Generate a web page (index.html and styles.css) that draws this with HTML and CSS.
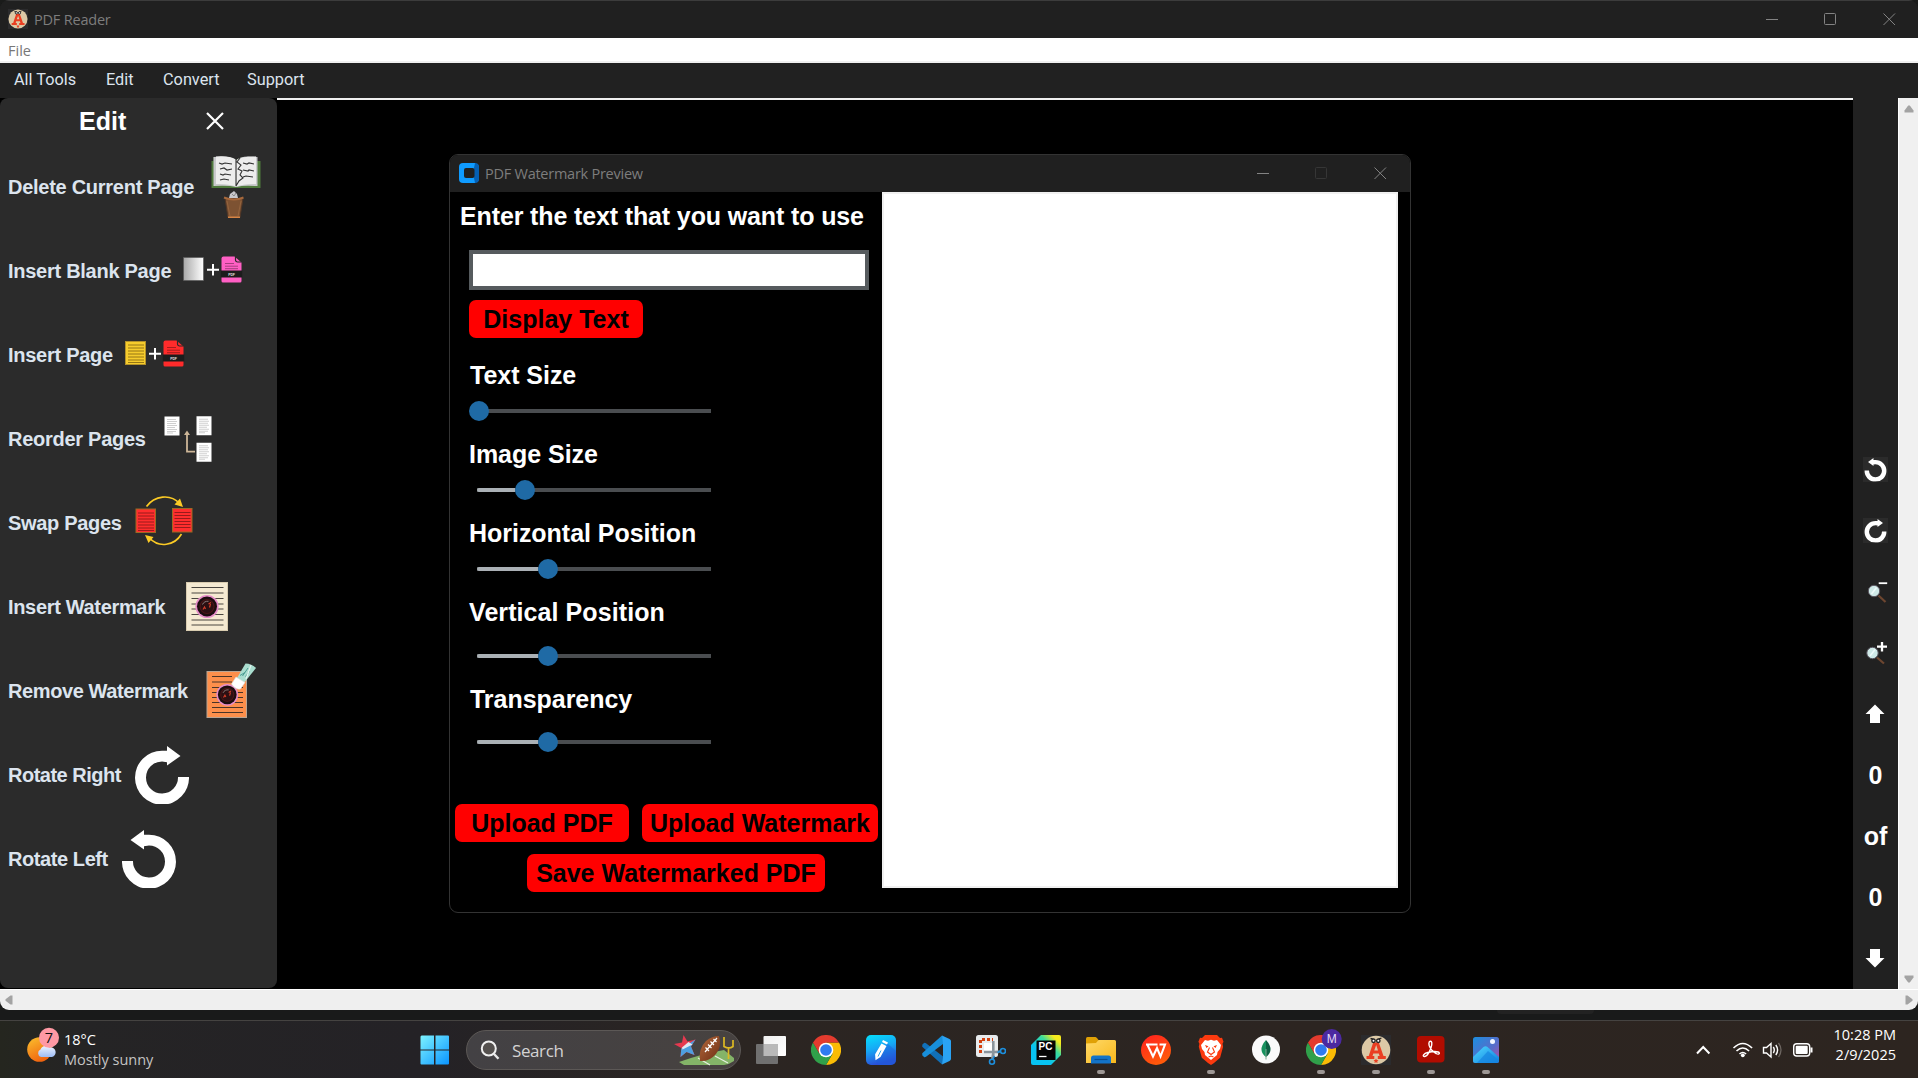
FILE: index.html
```html
<!DOCTYPE html>
<html lang="en">
<head>
<meta charset="utf-8">
<title>PDF Reader</title>
<link rel="stylesheet" href="styles.css">
</head>
<body>
<svg class="defs" width="0" height="0" aria-hidden="true">
  <defs>
    <linearGradient id="blank" x1="0" x2="1"><stop offset="0" stop-color="#a8a8a8"/><stop offset="1" stop-color="#fff"/></linearGradient>
    <linearGradient id="win" x1="0" y1="0" x2="1" y2="1"><stop offset="0" stop-color="#7df3ff"/><stop offset="1" stop-color="#0a94ff"/></linearGradient>
    <linearGradient id="sun" x1="0" y1="0" x2="0.5" y2="1"><stop offset="0" stop-color="#fbc22e"/><stop offset="1" stop-color="#f0640f"/></linearGradient>
    <linearGradient id="cloud" x1="0" y1="0" x2="0" y2="1"><stop offset="0" stop-color="#eef4ff"/><stop offset="1" stop-color="#9dbcf5"/></linearGradient>
    <linearGradient id="pen" x1="0" y1="0" x2="0.3" y2="1"><stop offset="0" stop-color="#05e0fb"/><stop offset="0.5" stop-color="#16a8f5"/><stop offset="1" stop-color="#2a4fd8"/></linearGradient>
    <linearGradient id="folder" x1="0" y1="0" x2="1" y2="1"><stop offset="0" stop-color="#ffd968"/><stop offset="1" stop-color="#f8b81c"/></linearGradient>
    <linearGradient id="wps" x1="0" y1="0" x2="0.5" y2="1"><stop offset="0" stop-color="#ff1f1f"/><stop offset="1" stop-color="#ff5a0a"/></linearGradient>
    <linearGradient id="pyc" x1="0" y1="1" x2="1" y2="0"><stop offset="0.35" stop-color="#07c3f2"/><stop offset="0.65" stop-color="#3ddc9a"/><stop offset="0.85" stop-color="#f6ea1e"/></linearGradient>
    <linearGradient id="photo" x1="0" y1="0" x2="1" y2="1"><stop offset="0" stop-color="#1b8fe0"/><stop offset="0.6" stop-color="#5b6bc8"/><stop offset="1" stop-color="#c04a9c"/></linearGradient>
    <linearGradient id="hill" x1="0" y1="0" x2="1" y2="1"><stop offset="0" stop-color="#4fd8ff"/><stop offset="1" stop-color="#0f7fe0"/></linearGradient>
    <linearGradient id="ball" x1="0" y1="0" x2="1" y2="1"><stop offset="0" stop-color="#b4673a"/><stop offset="1" stop-color="#6e3015"/></linearGradient>
    <linearGradient id="tv" x1="0" y1="0" x2="1" y2="1"><stop offset="0" stop-color="#f0f0f0"/><stop offset="1" stop-color="#fff"/></linearGradient>
    <symbol id="letter-a" viewBox="0 0 30 30">
      <rect width="30" height="30" fill="#2b2b2d"/><circle cx="15" cy="15" r="14.3" fill="#dcc9a6"/>
      <path d="M5.500 24v-3h2.200L12.200 7.500h5.600L22.500 21h2.300v3h-8v-3h1.800l-.8-2.500h-5.500L11.500 21h1.800v3zM13.200 15.500h3.800L15.200 10z" fill="#ea3f22"/>
      <path d="M9.500 3.500l4 .8M16.500 4.300l4-1.300" stroke="#222" stroke-width="1.300"/>
      <circle cx="12.500" cy="5.800" r="1.700" fill="#fff" stroke="#222" stroke-width="1.400"/><circle cx="17.300" cy="5.800" r="1.700" fill="#fff" stroke="#222" stroke-width="1.400"/>
      <path d="M15 23.500l.8 1.600 1.700.2-1.300 1.100.4 1.700-1.600-.9-1.600.9.400-1.700-1.300-1.100 1.700-.2z" fill="#ea3f22"/>
    </symbol>
    <symbol id="chrome" viewBox="0 0 30 30">
      <path d="M15 7.500H28A15 15 0 0 1 15 30l6.500-11.250z" fill="#fbbc05"/>
      <path d="M2 7.500A15 15 0 0 0 15 30l6.500-11.250L8.500 18.750z" fill="#30a04a"/>
      <path d="M2 7.500A15 15 0 0 1 28 7.500H15L8.500 18.750z" fill="#e33b2e"/>
      <circle cx="15" cy="15" r="7.300" fill="#fff"/><circle cx="15" cy="15" r="5.800" fill="#2f7bf0"/>
    </symbol>
    <symbol id="pdf-file" viewBox="0 0 22 28">
      <path d="M3 1h11l7 6V25.500a1.500 1.500 0 0 1-1.500 1.500H2.500A1.500 1.500 0 0 1 1 25.500V3a2 2 0 0 1 2-2z" fill="currentColor"/>
      <path d="M15 1v3.500a2 2 0 0 0 2 2H21" fill="none" stroke="#2b2b2b" stroke-width="1.200"/>
      <path d="M4.500 8h9M4.500 10.700h13M4.500 13.200h13" stroke="#000" stroke-opacity=".35" stroke-width="1"/>
      <rect x="0" y="15" width="22" height="7" fill="#1c1c1c"/>
      <text x="11" y="20" text-anchor="middle" class="tiny">PDF</text>
    </symbol>
    <symbol id="doc" viewBox="0 0 16 20">
      <rect x=".5" y=".5" width="15" height="19" fill="#fff"/>
      <path d="M3 3.500h9M3 5.500h10M3 7.500h9M3 9.500h10M3 11.500h8M3 13.500h10M3 15.500h9M3 17h6" stroke="#cfcfcf" stroke-width="1"/>
    </symbol>
    <symbol id="turn-right" viewBox="0 0 54 58">
      <path d="M32 0v4.700h-5A27 27 0 1 0 54 31H43A16 16 0 1 1 27 15.500l5 .8V19.500L45.500 10z" fill="#fff"/>
    </symbol>
    <symbol id="stamp" viewBox="0 0 24 24">
      <circle cx="12" cy="12" r="11.600" fill="#e58cc8"/><circle cx="12" cy="12" r="10" fill="#1c0d10"/>
      <circle cx="12" cy="12" r="7" fill="#2c1013" stroke="#4a1518" stroke-width="1.200"/>
      <path d="M7.500 10c1-2.500 3.500-3.500 6-3.200" fill="none" stroke="#8b7a7a" stroke-width="1"/>
      <path d="M8 15l1.500-2.500 1 2M14.500 13l1-3.500M13.500 9.500l2.500-1.500" fill="none" stroke="#d23c28" stroke-width="1.200"/>
    </symbol>
  </defs>
</svg>

<div class="screen">
  <main class="window">
    <header class="titlebar">
      <svg class="app-icon" width="20" height="20"><use href="#letter-a"/></svg>
      <span class="title title-main">PDF Reader</span>
      <svg class="winctl" width="130" height="14" viewBox="0 0 130 14"><path d="M0 7.500h12M117.500 1.500l11.500 11.500M129 1.500L117.500 13"/><rect x="58.500" y="1.500" width="11" height="11" rx="1"/></svg>
    </header>
    <nav class="menubar"><span class="file">File</span></nav>
    <nav class="toolbar"><span class="t1">All Tools</span><span class="t2">Edit</span><span class="t3">Convert</span><span class="t4">Support</span></nav>

    <div class="workspace">
      <div class="side-wrap">
      <aside class="sidebar">
        <div class="side-head"><h2>Edit</h2><svg width="18" height="18" viewBox="0 0 18 18"><path d="M1 1l16 16M17 1L1 17" stroke="#fff" stroke-width="2.200"/></svg></div>
        <div class="tool"><span class="l-delete">Delete Current Page</span>
          <svg width="52" height="84" viewBox="210 145 52 84">
            <path d="M211.500 161h2v-4h10q8 0 12.500 3 4-3 12-3h9v4h3.500v27h-49z" fill="#4f7a3d"/>
            <path d="M213.500 186v-29l9-.5q9 0 13.500 4 4-4 12-4l9.500.5v29h-2q-12-1-19 1-9-2-23-1z" fill="#c9c9cc"/>
            <path d="M216 184v-27.500q13-1 20 3v27q-8-3-20-2.500zM236.500 160q6-4 19.500-3.500V184q-12-.5-19.500 2.500z" fill="#ececec"/>
            <path d="M236 159v27M240 158l-3 4 4 3-3 4 4 2-2 4 3 3-4 3-3 5" fill="none" stroke="#333" stroke-width="1.100"/>
            <path d="M219 163l3 1 3-1 7 1M220 169l4-1 3 2 5-1M220 174l3 1 2-1 6 1M220 180l4-1 5 1M243 163l4 1 2-1 5 1M243 170l5 1 1-1 5 1M243 177l3-1 7 1" fill="none" stroke="#333" stroke-width="1.200"/>
            <path d="M229 198l1-4 4-3 3 3 1 4z" fill="#c8c8cc"/><path d="M232 194l2 2 2-3" stroke="#888" fill="none"/>
            <path d="M225 198.500h18l-3 19h-12z" fill="#7d5232" stroke="#4d3526"/><path d="M224 197.500q10 4 19.500 0" fill="none" stroke="#a8693c" stroke-width="2"/><path d="M228 217.300h12" stroke="#d58445" stroke-width="1.600"/><path d="M227 201l3 15M241 201l-3 15" stroke="#9a6840" stroke-width=".8"/>
          </svg></div>
        <div class="tool"><span class="l-blank">Insert Blank Page</span>
          <svg width="62" height="84" viewBox="182 229 62 84">
            <rect x="183.500" y="257.500" width="20" height="23" fill="url(#blank)" stroke="#555" stroke-width=".6"/>
            <path d="M207 269.700h12M213 264v11.500" stroke="#fff" stroke-width="2"/>
            <g color="#ff5fc4"><use href="#pdf-file" x="220.500" y="255.500" width="22" height="28"/></g>
          </svg></div>
        <div class="tool"><span class="l-insert">Insert Page</span>
          <svg width="62" height="84" viewBox="124 313 62 84">
            <rect x="125.500" y="341.500" width="20" height="23" fill="#f6cc2c" stroke="#b3912a"/>
            <path d="M128 345h16M128 348h16M128 351h16M128 354h16M128 357h16M128 360h16M128 362.500h16" stroke="#8a6c12" stroke-width=".9"/>
            <path d="M149 353.700h12M155 348v11.500" stroke="#fff" stroke-width="2"/>
            <g color="#ff2b2b"><use href="#pdf-file" x="162.500" y="339.500" width="22" height="28"/></g>
          </svg></div>
        <div class="tool"><span class="l-reorder">Reorder Pages</span>
          <svg width="50" height="84" viewBox="163 397 50 84">
            <use href="#doc" x="164" y="416" width="16" height="20"/><use href="#doc" x="196" y="415.500" width="16" height="20.500"/><use href="#doc" x="196" y="442" width="16" height="20.500"/>
            <path d="M195 451.700h-8V434" fill="none" stroke="#cdb698" stroke-width="1.800"/><path d="M184 435l3-4.500 3 4.500z" fill="#cdb698"/>
          </svg></div>
        <div class="tool"><span class="l-swap">Swap Pages</span>
          <svg width="60" height="84" viewBox="135 481 60 84">
            <g fill="#ff2e2e" stroke="#9c6a22"><rect x="136" y="509" width="19.500" height="23.500"/><rect x="172.500" y="508.500" width="19.500" height="23.500"/></g>
            <path d="M138 513h16M138 516h16M138 519h16M138 522h16M138 525h16M138 528h16M138 530.500h16M174.500 512.500h16M174.500 515.500h16M174.500 518.500h16M174.500 521.500h16M174.500 524.500h16M174.500 527.500h16" stroke="#8c1a1a" stroke-width=".9"/>
            <path d="M146.500 506.500c8-11 24-13 33-3M181.500 534c-7 12-23 14-32 4" fill="none" stroke="#fccb25" stroke-width="1.600"/>
            <path d="M183 507l-8.500-2.500 5.500-6zM145 535l8.500 2-5 6z" fill="#fccb25"/>
          </svg></div>
        <div class="tool"><span class="l-iwm">Insert Watermark</span>
          <svg width="44" height="84" viewBox="185 565 44 84">
            <rect x="186.500" y="582.500" width="41" height="48" fill="#f5ead2" stroke="#d9ccb0"/>
            <path d="M191.500 587.500h32M191.500 593h32M191.500 598.500h32M191.500 604h32M191.500 609h32M191.500 614.500h32M191.500 620h32M191.500 625h32" stroke="#4a4640"/>
            <use href="#stamp" x="195" y="594.500" width="24" height="24"/>
          </svg></div>
        <div class="tool"><span class="l-rwm">Remove Watermark</span>
          <svg width="52" height="84" viewBox="205 649 52 84">
            <rect x="207" y="671.500" width="39.500" height="46" fill="#fd8f4b" stroke="#b9a594"/>
            <path d="M212 676.500h20M212 682h20M212 687.500h31M212 692.500h31M212 697.500h31M212 702.500h31M212 707.500h31M212 712.500h31" stroke="#4a3428"/>
            <use href="#stamp" x="216" y="683.500" width="22.500" height="22.500"/>
            <path d="M237 678l8.500-14.500q6 0 10.500 4.500l-12 15z" fill="#a9ddcf"/><path d="M231.500 684l4.500-7 9 5.500-4.500 6.500q-5 1-9-5z" fill="#fff" stroke="#ddd" stroke-width=".6"/><path d="M242.500 676l5.500-8M245.500 676.500l4-5M240 675.500l5-3" stroke="#4a9c92" stroke-width="1"/><path d="M251 665l-5 14" stroke="#e2f5ef" stroke-width="1.200"/>
          </svg></div>
        <div class="tool"><span class="l-rr">Rotate Right</span><svg class="big-turn" width="54" height="58"><use href="#turn-right"/></svg></div>
        <div class="tool"><span class="l-rl">Rotate Left</span><svg class="big-turn flip" width="54" height="58"><use href="#turn-right"/></svg></div>
      </aside>
      </div>

      <section class="viewer">
        <div class="dialog">
          <header class="titlebar dlg-bar">
            <svg class="app-icon" width="20" height="20" viewBox="0 0 20 20"><path d="M4 0h12l4 3v14l-4 3H4a4 4 0 0 1-4-4V4a4 4 0 0 1 4-4z" fill="#0f9bff"/><path d="M16 0a4 4 0 0 1 4 4v12a4 4 0 0 1-4 4l-1-5V5z" fill="#0560b4"/><rect x="5" y="5" width="10.500" height="10" rx="2" fill="#202020"/></svg>
            <span class="title title-dlg">PDF Watermark Preview</span>
            <svg class="winctl" width="130" height="14" viewBox="0 0 130 14"><path d="M0 7.500h12M117.500 1.500l11.500 11.500M129 1.500L117.500 13"/><rect class="off" x="58.500" y="1.500" width="11" height="11" rx="1"/></svg>
          </header>
          <div class="dlg-body">
            <div class="form">
              <div class="lbl prompt">Enter the text that you want to use</div>
              <input class="entry" type="text" aria-label="Watermark text">
              <button class="btn display">Display Text</button>
              <div class="lbl k1">Text Size</div><div class="slider s0"><i class="fill"></i><i class="knob"></i></div>
              <div class="lbl">Image Size</div><div class="slider s1"><i class="fill"></i><i class="knob"></i></div>
              <div class="lbl">Horizontal Position</div><div class="slider s2"><i class="fill"></i><i class="knob"></i></div>
              <div class="lbl wide">Vertical Position</div><div class="slider s2 far"><i class="fill"></i><i class="knob"></i></div>
              <div class="lbl k1">Transparency</div><div class="slider s2 mid"><i class="fill"></i><i class="knob"></i></div>
              <div class="uploads"><button class="btn b-pdf">Upload PDF</button><button class="btn b-wm">Upload Watermark</button></div>
              <button class="btn save">Save Watermarked PDF</button>
            </div>
            <div class="canvas"></div>
          </div>
        </div>
      </section>

      <aside class="rail">
        <div class="slot"><svg class="chip flip" width="25" height="25" viewBox="0 0 25 25"><rect width="25" height="25" fill="#2b2b2b"/><use href="#turn-right" x="1" y="1" width="23" height="23.500"/></svg></div>
        <div class="slot"><svg class="chip" width="25" height="25" viewBox="0 0 25 25"><rect width="25" height="25" fill="#2b2b2b"/><use href="#turn-right" x="1" y="1" width="23" height="23.500"/></svg></div>
        <div class="slot"><svg width="24" height="24" viewBox="1864 580 24 24"><path d="M1878.700 583.200h8.500" stroke="#fff" stroke-width="1.800"/><path d="M1878.500 595.500l7 6.500" stroke="#6d4630" stroke-width="2.200"/><circle cx="1874" cy="591" r="5.700" fill="#cfe9e7" stroke="#5a5560" stroke-width="1"/><path d="M1871.500 594l5-6.500" stroke="#eefafa" stroke-width="1.600"/></svg></div>
        <div class="slot"><svg width="24" height="24" viewBox="1864 641 24 24"><path d="M1877 646.700h10M1882 642v9.500" stroke="#fff" stroke-width="2.300"/><path d="M1877 657.500l7 6" stroke="#6d4630" stroke-width="2.200"/><circle cx="1872.500" cy="653" r="5.700" fill="#cfe9e7" stroke="#5a5560" stroke-width="1"/><path d="M1870 656l5-6.500" stroke="#eefafa" stroke-width="1.600"/></svg></div>
        <div class="slot"><svg width="21" height="20" viewBox="0 0 21 20"><path d="M10 .5L19.500 10H15v9H5v-9H.5z" fill="#fff"/></svg></div>
        <div class="slot num">0</div>
        <div class="slot num">of</div>
        <div class="slot num">0</div>
        <div class="slot"><svg width="21" height="20" viewBox="0 0 21 20"><path d="M10 19.500L.5 10H5V1h10v9h4.500z" fill="#fff"/></svg></div>
      </aside>
      <div class="vscroll"><svg width="10" height="8" viewBox="0 0 10 8"><path d="M4.200.5h1.600L9.500 5.500V7.500h-9V5.500z"/></svg><svg width="10" height="8" viewBox="0 0 10 8"><path d="M4.200 7.500h1.600L9.500 2.500V.5h-9v2z"/></svg></div>
    </div>
    <div class="hscroll"><svg width="8" height="10" viewBox="0 0 8 10"><path d="M.5 4.200v1.600L5.500 9.500h2v-9h-2z"/></svg><svg width="8" height="10" viewBox="0 0 8 10"><path d="M7.500 4.200v1.600L2.500 9.500h-2v-9h2z"/></svg></div>
  </main>
  <div class="desk"><span></span></div>

  <footer class="taskbar">
    <div class="weather">
      <svg width="34" height="40" viewBox="26 1026 34 40"><circle cx="39.500" cy="1049.500" r="12.300" fill="url(#sun)"/><path d="M41 1057a4 4 0 0 1-.5-7.500 5.500 5.500 0 0 1 9-2 4.800 4.800 0 0 1 2.500 9.500z" fill="url(#cloud)"/><circle cx="49" cy="1037.700" r="10" fill="#ff99a4"/><text x="49" y="1043" text-anchor="middle" class="badge">7</text></svg>
      <div class="two"><span class="w1">18°C</span><span class="w2">Mostly sunny</span></div>
    </div>
    <svg class="start" width="30" height="30" viewBox="0 0 30 30"><path d="M1.500.5H14v14H.5v-13zM15.500.5H28a1 1 0 0 1 1 1v13H15.500zM.5 15.500H14v14H1.500a1 1 0 0 1-1-1zM15.500 15.500H29v13a1 1 0 0 1-1 1H15.500z" fill="url(#win)"/></svg>
    <div class="search">
      <svg width="20" height="20" viewBox="0 0 20 20"><circle cx="8.800" cy="8.500" r="7" fill="#55514f" stroke="#f0f0f0" stroke-width="2"/><path d="M13.800 13.800l4.700 5" stroke="#e8e8e8" stroke-width="2.400"/></svg>
      <span>Search</span>
      <svg class="football" width="60" height="32" viewBox="0 0 60 32">
        <path d="M5 28q22-8 45-12l10 8v3q-4 3-10 4H10z" fill="#84b468"/><path d="M24 24l12 7M41 22l13 7" stroke="#e6f0df" stroke-width="1.200"/>
        <path d="M9.500 1l4 6.500L21.500 5.500 17 12.500l3.500 8.500-8-3-6 5 .8-9L0 10l8-1.500z" fill="#e63950"/>
        <path d="M21.500 5.500L17 12.500l3.500 8.500-8-3-6 5 .8-8.500z" fill="#4d9fe0"/><path d="M8 13.500L14.500 8l4 2.500-10 5z" fill="#dfe8f4"/>
        <path d="M26 27q-2-12 6-20 6-5 13-5 3 10-3 18-7 8-16 7z" fill="url(#ball)"/><path d="M31 18l12-14M31.500 13.500l3.500 3.500M34 10.500l3.500 3.500M36.500 7.500l3.500 3.500M39.500 5l3 3" stroke="#fff" stroke-width="1.200"/>
        <path d="M50 3v9.500q5 3 9 0V6M54.500 13v12" fill="none" stroke="#dcb923" stroke-width="1.700"/>
      </svg>
    </div>
    <div class="apps">
      <span class="app"><svg width="30" height="30" viewBox="0 0 30 30"><rect x="7.500" y="1" width="22.500" height="20" rx="1" fill="url(#tv)"/><rect y="9" width="22" height="20" rx="1" fill="#707070"/><rect x="7.500" y="9" width="14.500" height="12" fill="#b9b9b9"/></svg></span>
      <span class="app"><svg width="30" height="30"><use href="#chrome"/></svg></span>
      <span class="app"><svg width="30" height="30" viewBox="0 0 30 30"><rect width="30" height="30" rx="5" fill="url(#pen)"/><path d="M21 8l9 8v9a5 5 0 0 1-5 5H13l-4-5z" fill="#1b60dc" opacity=".45"/><path d="M17 5l5 2.500-1 2-5-2.400zM15.500 8.500l5 2.500-6 11-5 3.200-.4-6z" fill="#fff"/><path d="M12 21.500l3-6" stroke="#35a9e8"/></svg></span>
      <span class="app"><svg width="30" height="30" viewBox="0 0 30 30"><path d="M1 10l2-2q1-.6 2 .2L24 23l-3 6.500L1.500 12q-.9-1 0-2z" fill="#1170b8"/><path d="M1 20l2 2q1 .6 2-.2L24 7.500 21 .5 1.500 18q-.9 1 0 2z" fill="#188fda"/><path d="M21 .5l7.500 3.500q1.500.8 1.500 2v18q0 1.200-1.500 2L21 29.500l1-7V8z" fill="#2aa3f4"/></svg></span>
      <span class="app"><svg width="30" height="30" viewBox="0 0 30 30"><rect width="22" height="22" rx="2.500" fill="#e8ebed"/><path d="M4.500 18V4.500H17" fill="none" stroke="#d4410f" stroke-width="3" stroke-dasharray="3 2"/><path d="M8 8h8v8H8z" fill="#fff"/><path d="M17.300 6v16M8 17h15" stroke="#8a949c" stroke-width="2.600"/><path d="M17 18l-1 6M19 17l5-.5" stroke="#8a949c" stroke-width="2"/><circle cx="16" cy="26.700" r="2.500" fill="none" stroke="#1d8fdd" stroke-width="1.600"/><circle cx="27" cy="16" r="2.500" fill="none" stroke="#1d8fdd" stroke-width="1.600"/><path d="M17 24l1.500-3M24.500 16l-3 1.500" stroke="#1d8fdd" stroke-width="1.600"/></svg></span>
      <span class="app"><svg width="30" height="30" viewBox="0 0 30 30"><path d="M10 0h18q2 0 2 2v18L20 30H2q-2 0-2-2V10z" fill="url(#pyc)"/><rect x="5.500" y="5.500" width="19" height="19.500" fill="#050505"/><text x="7.500" y="15" class="pc">PC</text><path d="M8 21.500h7.500" stroke="#fff" stroke-width="1.300"/></svg></span>
      <span class="app run"><svg width="30" height="30" viewBox="0 0 30 30"><path d="M0 3.500Q0 2 1.500 2h8q1 0 3 3v5H0z" fill="#e0a106"/><path d="M0 8.500l10-.5 2.500-3H28.500Q30 5 30 6.500V28H0z" fill="url(#folder)"/><path d="M5 28.500V23q0-2.500 2.500-2.500h15Q25 20.500 25 23v5.500z" fill="#1474c8"/><path d="M8.500 24.500h13" stroke="#0a4f93" stroke-width="1.200"/></svg></span>
      <span class="app"><svg width="30" height="30" viewBox="0 0 30 30"><circle cx="15" cy="15" r="15" fill="url(#wps)"/><path d="M5 9.500h11.500M6.500 10l5.500 11.500L16 13l3.500 8.500L24 9.500h-5.500" fill="none" stroke="#fff" stroke-width="2.100"/></svg></span>
      <span class="app run"><svg width="30" height="30" viewBox="0 0 30 30"><path d="M9 0h12l3 3 2-.2 1.500 4-1 2 .6 3-3 11L18 28l-3 2-3-2-6.200-5.200-3-11 .6-3-1-2L4 2.800 6 3z" fill="#fb3a0f"/><path d="M9 5l3 .8 3-1 3 1L21 5l4 5-1 4-2.500 3-.5 3-6 5-6-5-.5-3L6 14l-1-4z" fill="#fff"/><path d="M9 10l3.500 1.200-2 1.800zM21 10l-3.500 1.200 2 1.800z" fill="#fb3a0f"/><path d="M13.500 12.500L11.500 17l3.500 2.500 3.500-2.500-2-4.500M12.500 22l2.500-1 2.500 1" fill="none" stroke="#fb3a0f" stroke-width="1.100"/></svg></span>
      <span class="app"><svg width="30" height="30" viewBox="0 0 30 30"><circle cx="15" cy="14.500" r="14" fill="#fafafa"/><path d="M15 5q-5 5.500-4.500 10 .4 4 4.500 7z" fill="#17925e"/><path d="M15 5q5 5.500 4.500 10-.4 4-4.500 7z" fill="#0d6043"/><path d="M15 14v10.500" stroke="#7ba990"/></svg></span>
      <span class="app run"><svg width="30" height="30" overflow="visible"><use href="#chrome" width="30" height="30"/><circle cx="25.700" cy="4" r="10" fill="#4b29a0"/><text x="25.700" y="8.300" text-anchor="middle" class="m">M</text></svg></span>
      <span class="app run"><svg width="30" height="30"><use href="#letter-a"/></svg></span>
      <span class="app run"><svg width="30" height="30" viewBox="0 0 30 30"><rect x="1" y="1" width="27.500" height="26.500" rx="4" fill="#b10c00"/><path d="M13.200 7c2-2 3 0 2.500 3-.5 4-4 11-7 11.500-3 0-1-3 3-4s8-1.500 10.500-.5c2.500 1.200.5 3-2 1.500-3-1.500-6-5-7-8-.5-2-.3-3 0-3.500z" fill="none" stroke="#fff" stroke-width="1.400"/></svg></span>
      <span class="app run"><svg width="30" height="30" viewBox="0 0 30 30"><rect x="2" y="2" width="26" height="26" rx="2.500" fill="url(#photo)"/><path d="M2 22L12.500 12q2-1.500 4 0L28 22v3.500q0 2.500-2.500 2.500h-21Q2 28 2 25.500z" fill="url(#hill)"/><path d="M6 28L17 16l11 9.500q0 2.500-2.500 2.500z" fill="#1684e0" opacity=".7"/><circle cx="21.500" cy="6.500" r="2.500" fill="#f2f6ff"/></svg></span>
    </div>
    <div class="tray">
      <svg width="120" height="24" viewBox="1694 1038 120 24" fill="none" stroke="#fff">
        <path d="M1697 1053.500l6.200-6.500 6.200 6.500" stroke-width="2"/>
        <path d="M1733.500 1048q9.300-9 18.600 0M1736.500 1051q6.300-6 12.600 0M1739.500 1054q3.300-3 6.600 0" stroke-width="1.600"/><circle cx="1742.800" cy="1055.300" r="1.900" fill="#fff" stroke="none"/>
        <path d="M1763.500 1047.500h3l4.500-4v13.500l-4.500-4h-3z" stroke-width="1.400"/><path d="M1773.300 1047q2 3 0 6M1775.800 1045q3.600 5 0 10" stroke-width="1.400"/><path d="M1778.500 1043q5 7 0 14" stroke="#6c6560" stroke-width="1.300"/>
        <rect x="1793.700" y="1043.700" width="16" height="12.300" rx="3" stroke-width="1.400"/><rect x="1795.700" y="1045.700" width="12" height="8.300" rx="1" fill="#fff" stroke="none"/><path d="M1811.500 1047.500v5" stroke-width="2"/>
      </svg>
      <div class="clock"><span class="c1">10:28 PM</span><span class="c2">2/9/2025</span></div>
    </div>
  </footer>
</div>
</body>
</html>
```
FILE: styles.css
```css
* { box-sizing: border-box; }
body { margin: 0; background: #1a1a1a; font-family: "Liberation Sans", Arial, sans-serif; overflow: hidden; }
svg { display: block; flex: none; }
.defs { position: absolute; }
.tiny { font: bold 3.600px "Liberation Sans", sans-serif; fill: #ddd; }
.screen { width: 1918px; height: 1078px; display: flex; flex-direction: column; background: #1a1b1a; }
.window { height: 1010px; display: flex; flex-direction: column; border-radius: 9px; overflow: hidden; background: #202020; flex: none; }

.titlebar { height: 38px; display: flex; align-items: center; background: #202020; border-top: 1px solid #3c3c3c; padding: 0 22px 1px 8px; flex: none; }
.title { font-family: "Open Sans", "Noto Sans", sans-serif; font-size: 14.500px; color: #7d7d7d; margin-left: 6px; white-space: nowrap; }
.title-main { letter-spacing: -0.200px; }
.title-dlg { letter-spacing: -0.250px; }
.winctl { margin-left: auto; fill: none; stroke: #838383; stroke-width: 1; }
.winctl .off { stroke: #363636; }
.menubar { height: 25px; background: #fff; border-bottom: 2px solid #f0f0f0; padding-left: 8px; line-height: 25px; flex: none; }
.file { font-family: "Open Sans", sans-serif; font-size: 14.500px; color: #777; }
.toolbar { height: 35px; background: #212121; display: flex; padding-left: 14px; font: 16.300px/33px Roboto, sans-serif; color: #dce4ee; flex: none; }
.t1 { width: 92px; }
.t2 { width: 57px; }
.t3 { width: 84px; }

.workspace { height: 891px; display: flex; background: #000; flex: none; }
.side-wrap { width: 277px; background: #000; flex: none; }
.sidebar { height: 890px; background: #2b2b2b; border-radius: 8px; padding-bottom: 8px; }
.side-head { height: 47px; display: flex; align-items: center; padding: 0 0 2px 79px; }
.side-head h2 { margin: 0; width: 127px; font-size: 25px; line-height: 30px; color: #fff; }
.tool { height: 84px; display: flex; align-items: center; padding-left: 8px; font-weight: bold; font-size: 20px; letter-spacing: -0.270px; color: #dce4ee; white-space: nowrap; }
.tool span { flex: none; }
.l-delete { width: 202px; }
.l-blank { width: 174px; }
.l-insert { width: 116px; }
.l-reorder { width: 155px; }
.l-swap { width: 127px; letter-spacing: -0.320px; }
.l-iwm { width: 177px; letter-spacing: -0.330px; }
.l-rwm { width: 197px; letter-spacing: -0.400px; }
.l-rr { width: 127px; letter-spacing: -0.500px; }
.l-rl { width: 114px; letter-spacing: -0.420px; }
.flip { transform: scaleX(-1); }

.viewer { width: 1576px; border-top: 2px solid #f0f0f0; padding: 54px 0 0 172px; flex: none; }
.dialog { width: 962px; height: 759px; border: 1px solid #333; border-radius: 9px; overflow: hidden; background: #000; }
.dlg-bar { height: 37px; border-top: 0; padding: 0 23px 1px 9px; }
.dlg-body { display: flex; }
.form { width: 432px; height: 720px; padding: 9px 0 0 19px; display: flex; flex-direction: column; align-items: flex-start; flex: none; }
.lbl { height: 30px; font-weight: bold; font-size: 25px; line-height: 30px; letter-spacing: -0.030px; color: #fff; white-space: nowrap; margin-top: 18px; flex: none; }
.prompt { margin: 0 0 19px -9px; letter-spacing: -0.130px; }
.wide { letter-spacing: 0.080px; }
.k1 { padding-left: 1px; }
.entry { width: 400px; height: 40px; border: 4px solid #565b5e; background: #fff; outline: 0; flex: none; }
.btn { height: 38px; padding: 0; border: 0; border-radius: 7px; background: #f00; color: #000; font: bold 25px/38px "Liberation Sans", Arial, sans-serif; white-space: nowrap; flex: none; }
.display { width: 174px; margin: 10px 0 4px; }
.slider { width: 242px; height: 20px; margin-top: 11px; display: flex; align-items: center; padding-left: 8px; background: linear-gradient(#4a4d50, #4a4d50) 8px 8px / 234px 4px no-repeat; flex: none; }
.slider.far { margin-top: 19px; }
.slider.mid { margin-top: 18px; }
.fill { height: 4px; background: #aab0b5; border-radius: 2px 0 0 2px; }
.knob { width: 20px; height: 20px; border-radius: 50%; background: #1f6aa5; }
.s0 { padding-left: 0; }
.s1 .fill { width: 38px; }
.s2 .fill { width: 61px; }
.uploads { display: flex; gap: 13px; margin: 52px 0 12px -14px; }
.b-pdf { width: 174px; }
.b-wm { width: 236px; }
.save { width: 298px; margin-left: 58px; }
.canvas { width: 516px; height: 696px; background: #fff; border: 2px solid #f0f0f0; flex: none; }

.rail { width: 45px; background: #212121; padding-top: 341px; flex: none; }
.slot { height: 61px; display: flex; align-items: center; justify-content: center; }
.num { font-weight: bold; font-size: 25px; line-height: 30px; padding-top: 1px; color: #fff; }
.vscroll { width: 20px; border-left: 1px solid #fff; background: #f0f0f0; display: flex; flex-direction: column; justify-content: space-between; align-items: center; padding: 7px 0 6px; fill: #a3a3a3; flex: none; }
.hscroll { height: 21px; border-top: 1px solid #fff; background: #efefef; display: flex; justify-content: space-between; align-items: center; padding: 0 5px 1px; fill: #a3a3a3; }
.desk { height: 10px; background: #191a1a; padding-left: 1497px; flex: none; }
.desk span { display: block; width: 97px; height: 4px; background: #222; border-radius: 0 0 5px 5px; }

.taskbar { height: 58px; display: flex; border-top: 1px solid #454341; background: linear-gradient(90deg, #25261f 0, #252425 80px, #242226 420px, #2b2522 720px, #2d2520 100%); font-family: "Open Sans", "Noto Sans", sans-serif; color: #fff; flex: none; }
.weather { width: 420px; padding: 5px 0 0 26px; display: flex; gap: 4px; flex: none; }
.badge { font: 14.500px "Open Sans", sans-serif; fill: #111; }
.two, .clock { display: flex; flex-direction: column; font-size: 14.500px; line-height: 20px; white-space: nowrap; padding-top: 4px; }
.w2 { color: #c4c3c3; }
.start { margin-top: 14px; }
.search { width: 275px; height: 40px; margin: 9px 0 0 16px; border-radius: 20px; border: 1px solid #5c5856; background: linear-gradient(90deg, #434144, #474240); display: flex; align-items: center; padding: 0 6px 0 13px; font-size: 17px; color: #d4d3d3; flex: none; }
.search span { margin-left: 12px; letter-spacing: -0.400px; }
.football { margin-left: auto; }
.apps { display: flex; gap: 25px; padding: 14px 0 0 15px; flex: none; }
.app { width: 30px; display: flex; flex-direction: column; align-items: center; }
.run::after { content: ""; width: 8px; height: 4px; border-radius: 2px; background: #9d9794; margin-top: 5px; }
.pc { font: bold 10px "Liberation Sans", sans-serif; fill: #fff; }
.m { font: 12px "Liberation Sans", sans-serif; fill: #e4ddf8; }
.tray { margin-left: auto; display: flex; padding: 0 22px 0 0; }
.tray svg { margin: 17px 19px 0 0; }
.clock { align-items: flex-end; }
```
